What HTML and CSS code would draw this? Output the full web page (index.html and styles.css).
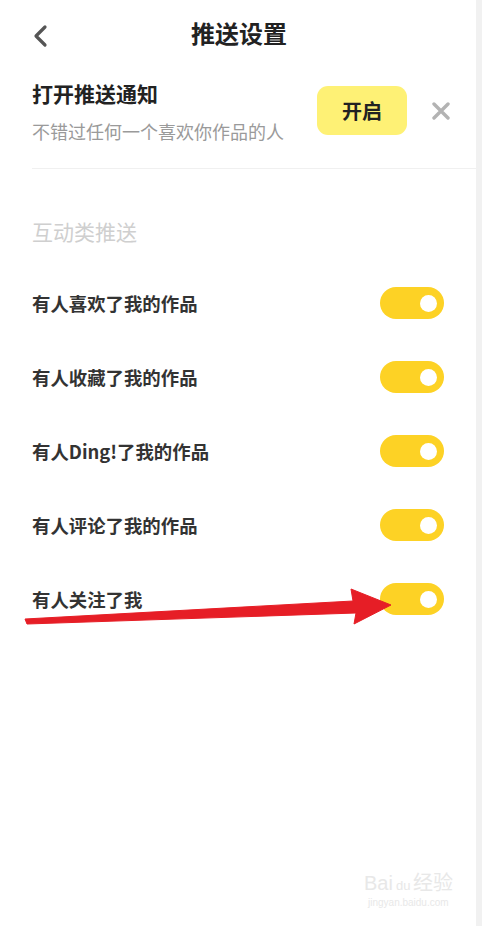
FILE: index.html
```html
<!DOCTYPE html>
<html lang="zh-CN">
<head>
    <meta charset="UTF-8">
    <meta name="viewport" content="width=device-width, initial-scale=1.0">
    <title>推送设置</title>
    <link rel="stylesheet" href="styles.css">
</head>
<body>

    <div class="page">
        <div class="screen">
            <!-- Top bar -->
            <div class="topbar">
                <div class="back">
                    <svg width="16" height="24" viewBox="0 0 16 24">
                        <path d="M13 3 L4 12 L13 21" fill="none" stroke="#555" stroke-width="3.2" stroke-linecap="round" stroke-linejoin="round"/>
                    </svg>
                </div>
                <div class="title">推送设置</div>
                <div></div>
            </div>

            <!-- Push notification banner -->
            <div class="notice">
                <div class="notice-text">
                    <div class="notice-title">打开推送通知</div>
                    <div class="notice-sub">不错过任何一个喜欢你作品的人</div>
                </div>
                <button type="button" class="open-btn">开启</button>
                <div class="close">
                    <svg width="18" height="18" viewBox="0 0 18 18">
                        <path d="M2 2 L16 16 M16 2 L2 16" stroke="#b3b3b3" stroke-width="3.4" stroke-linecap="round"/>
                    </svg>
                </div>
            </div>

            <!-- Interaction group -->
            <div class="group-label">互动类推送</div>

            <div class="row">
                <span class="row-text">有人喜欢了我的作品</span>
                <span class="switch"><span class="knob"></span></span>
            </div>
            <div class="row">
                <span class="row-text">有人收藏了我的作品</span>
                <span class="switch"><span class="knob"></span></span>
            </div>
            <div class="row">
                <span class="row-text">有人Ding!了我的作品</span>
                <span class="switch"><span class="knob"></span></span>
            </div>
            <div class="row">
                <span class="row-text">有人评论了我的作品</span>
                <span class="switch"><span class="knob"></span></span>
            </div>
            <div class="row">
                <span class="row-text">有人关注了我</span>
                <span class="switch"><span class="knob"></span></span>
            </div>
        </div>
        <div class="edge"></div>

        <!-- Red annotation arrow -->
        <svg class="arrow" width="482" height="926" viewBox="0 0 482 926">
            <polygon points="25,619 353,601 351,589 391,605 354,624 356,613 27,624" fill="#e61e26" stroke="#e61e26" stroke-width="1" stroke-linejoin="round"/>
        </svg>

        <!-- Watermark -->
        <div class="watermark">
            <div class="wm-main">Bai<span class="wm-du">du</span>经验</div>
            <div class="wm-url">jingyan.baidu.com</div>
        </div>
    </div>

</body>
</html>
```

FILE: styles.css
```css
body {
    margin: 0;
    padding: 0;
    background-color: #ffffff;
    font-family: "Noto Sans CJK SC", "Noto Sans", sans-serif;
    color: #333;
}

.page {
    position: relative;
    display: flex;
    width: 482px;
    height: 926px;
    overflow: hidden;
}

.screen {
    flex: 1;
    background-color: #ffffff;
}

.edge {
    width: 6px;
    background-color: #f1f1f1;
}

.topbar {
    display: grid;
    grid-template-columns: 1fr auto 1fr;
    align-items: center;
    height: 70px;
}

.back {
    display: flex;
    align-items: center;
    padding-left: 32px;
    padding-top: 2px;
}

.title {
    font-size: 24px;
    font-weight: 700;
    color: #222;
    line-height: 30px;
    padding-left: 2px;
    padding-bottom: 4px;
}

.notice {
    display: flex;
    align-items: center;
    margin-left: 32px;
    margin-top: 9px;
    padding-bottom: 24px;
    padding-right: 26px;
    border-bottom: 1px solid #f0f0f0;
}

.notice-text {
    flex: 1;
}

.notice-title {
    font-size: 21px;
    font-weight: 700;
    line-height: 28px;
    color: #222;
}

.notice-sub {
    margin-top: 11px;
    font-size: 18px;
    line-height: 26px;
    color: #9a9a9a;
}

.open-btn {
    width: 90px;
    height: 49px;
    border: none;
    border-radius: 11px;
    background-color: #fef175;
    font-family: inherit;
    font-size: 20px;
    font-weight: 700;
    color: #222;
    padding: 0;
    margin-top: -2px;
}

.close {
    display: flex;
    margin-left: 25px;
    margin-top: -2px;
}

.group-label {
    margin: 48px 0 21px 32px;
    font-size: 21px;
    line-height: 28px;
    color: #cfcfcf;
}

.row {
    display: flex;
    align-items: center;
    justify-content: space-between;
    height: 74px;
    padding: 0 32px;
}

.row-text {
    font-size: 18.4px;
    font-weight: 700;
    color: #333;
}

.switch {
    display: flex;
    align-items: center;
    justify-content: flex-end;
    width: 64px;
    height: 32px;
    border-radius: 16px;
    background-color: #fdd225;
    box-sizing: border-box;
    padding-right: 7px;
}

.knob {
    width: 17px;
    height: 17px;
    border-radius: 50%;
    background-color: #ffffff;
}

.arrow {
    position: absolute;
    left: 0;
    top: 0;
    pointer-events: none;
}

.watermark {
    position: absolute;
    left: 364px;
    top: 872px;
    color: #e8e8e8;
    font-family: "Liberation Sans", sans-serif;
}

.wm-main {
    font-size: 20px;
    line-height: 22px;
}

.wm-du {
    font-size: 13px;
    margin: 0 3px;
}

.wm-url {
    font-size: 10px;
    margin-left: 4px;
}
```
